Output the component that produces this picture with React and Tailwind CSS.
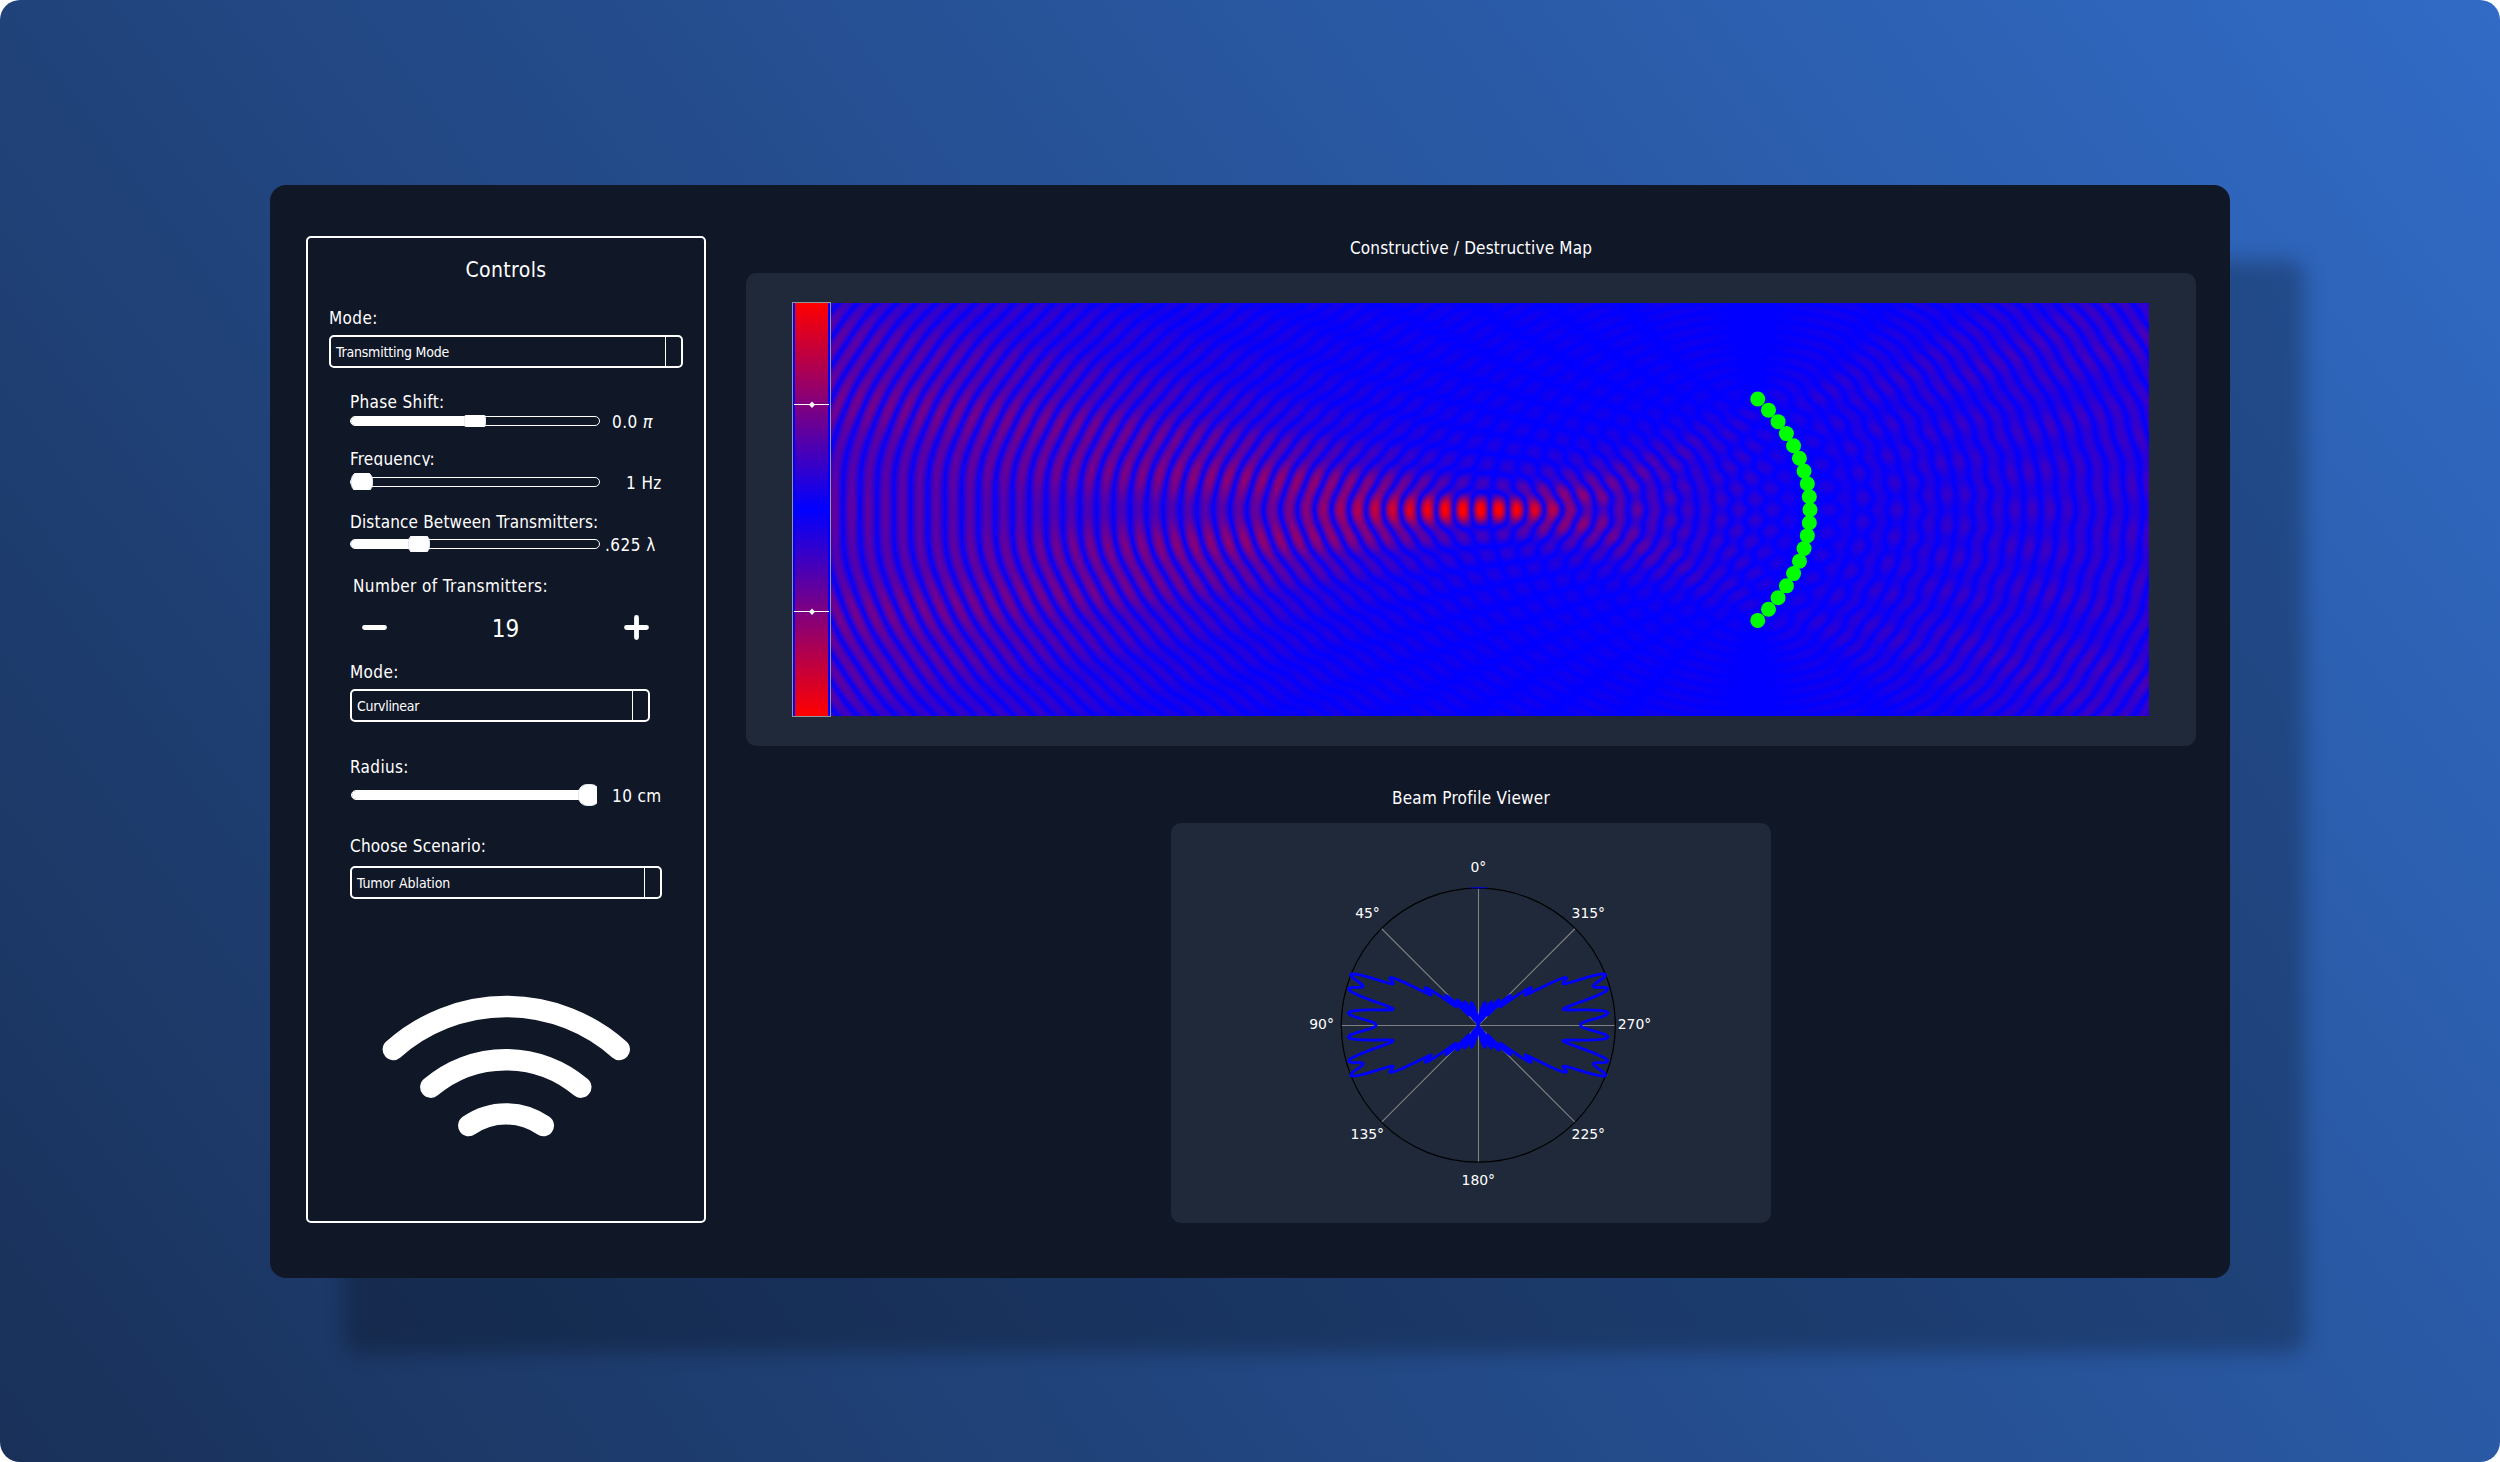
import React, { useLayoutEffect, useRef } from "react";

const COUNT = 19;
const HALF = (COUNT - 1) / 2;
const RADIUS = 9.65; // arc radius, in wavelengths
const STEP = (3.65 * Math.PI) / 180; // angle between neighbouring transmitters

const MAP = { width: 1318, height: 413, apexX: 978, apexY: 206.3, lambdaX: 33.85, lambdaY: 21.15, phase: 1.82, gain: 1.08 };

const ANGLES = Array.from({ length: COUNT }, (_, i) => (i - HALF) * STEP);
const SOURCES = ANGLES.map((a) => ({ x: -RADIUS * (1 - Math.cos(a)), y: RADIUS * Math.sin(a) }));

function fieldAt(x, y) {
  let sum = 0;
  for (const s of SOURCES) sum += Math.cos(2 * Math.PI * Math.hypot(x - s.x, y - s.y) + MAP.phase);
  return sum;
}

function arrayFactor(theta) {
  let re = 0;
  let im = 0;
  for (const a of ANGLES) {
    const p = 2 * Math.PI * RADIUS * Math.cos(a - theta);
    re += Math.cos(p);
    im += Math.sin(p);
  }
  return Math.hypot(re, im);
}

const SAMPLES = Array.from({ length: 1441 }, (_, i) => {
  const theta = (i / 1440) * 2 * Math.PI;
  return [theta, arrayFactor(theta)];
});
const PEAK = Math.max(...SAMPLES.map((s) => s[1]));
const BEAM = SAMPLES.map(([t, r]) => `${(307.2 + (137 * r * Math.cos(t)) / PEAK).toFixed(2)},${(202 - (137 * r * Math.sin(t)) / PEAK).toFixed(2)}`).join(" ");

function Label({ className = "", children }) {
  return <div className={"h-5 whitespace-pre text-[17px] leading-5 " + className}>{children}</div>;
}

function Select({ className, textClass, children }) {
  return (
    <div className={"flex h-[33px] shrink-0 rounded-[5px] border-2 border-white " + className}>
      <span className={"flex-1 pt-px pl-[5px] text-[14px] leading-[29px] " + textClass}>{children}</span>
      <span className="w-4 border-l border-white" />
    </div>
  );
}

function Slider({ className, fill, handle, trackClass = "border border-white" }) {
  return (
    <div className={"relative flex shrink-0 items-center overflow-hidden " + className}>
      <div className={"h-2.5 w-full overflow-hidden rounded-[5px] " + trackClass}>
        <div className={"h-full bg-white " + fill} />
      </div>
      <div className={"absolute top-1/2 h-[22px] w-[22px] -translate-y-1/2 rounded-[9px] border border-slate-200 bg-white " + handle} />
    </div>
  );
}

function InterferenceMap() {
  const ref = useRef(null);
  useLayoutEffect(() => {
    const { width, height, apexX, apexY, lambdaX, lambdaY, gain } = MAP;
    const ctx = ref.current.getContext("2d");
    const image = ctx.createImageData(width, height);
    let k = 0;
    for (let py = 0; py < height; py++) {
      for (let px = 0; px < width; px++) {
        const v = Math.min(1, (Math.abs(fieldAt((px - apexX) / lambdaX, (py - apexY) / lambdaY)) / COUNT) * gain);
        image.data[k++] = 255 * v;
        image.data[k++] = 0;
        image.data[k++] = 255 * (1 - v);
        image.data[k++] = 255;
      }
    }
    ctx.putImageData(image, 0, 0);
    ctx.fillStyle = "#00ff00";
    for (const s of SOURCES) {
      ctx.beginPath();
      ctx.arc(apexX + 1 + s.x * lambdaX, apexY + 0.4 + s.y * lambdaY, 7.5, 0, 2 * Math.PI);
      ctx.fill();
    }
  }, []);
  return <canvas ref={ref} width={MAP.width} height={MAP.height} className="mt-px block h-[413px] w-[1318px]" />;
}

function ColorBar() {
  return (
    <div className="flex h-[415px] w-[39px] border border-[#969696] bg-[#0000ff] px-0.5">
      <svg viewBox="0 0 33 413" className="h-[413px] w-[33px] overflow-visible">
        <defs>
          <linearGradient id="scale" x1="0" y1="0" x2="0" y2="1">
            <stop offset="0" stopColor="#ff0000" />
            <stop offset="0.5" stopColor="#0000ff" />
            <stop offset="1" stopColor="#ff0000" />
          </linearGradient>
        </defs>
        <rect x="0" y="0" width="33" height="413" fill="url(#scale)" />
        {[101.5, 308.5].map((y) => (
          <g key={y} fill="#fff">
            <rect x="-1" y={y - 0.5} width="35" height="1" />
            <path d={`M17 ${y - 3}l3 3.2-3 3.2-3-3.2z`} />
          </g>
        ))}
      </svg>
    </div>
  );
}

const TICKS = [
  ["0°", 307.3, 49],
  ["45°", 196.5, 94.7],
  ["315°", 417.3, 94.7],
  ["90°", 150.6, 206],
  ["270°", 463.5, 206],
  ["135°", 196.3, 315.7],
  ["225°", 417.3, 315.7],
  ["180°", 307.3, 361.7],
];

function BeamProfile() {
  return (
    <svg viewBox="0 0 600 400" className="h-[400px] w-[600px]">
      <g stroke="#808080" strokeWidth="1.1">
        <path d="M307.5 65.5v274M170.3 202.5h274M210.4 105.5l193.8 193.8M404.2 105.5L210.4 299.3" />
      </g>
      <circle cx="307.3" cy="202.2" r="137" fill="none" stroke="#000" strokeWidth="1.2" />
      <polyline points={BEAM} fill="none" stroke="#0000ff" strokeWidth="2.8" strokeLinejoin="round" />
      <path d="M299.5 64.8h16" stroke="#0000ff" strokeWidth="1" />
      <g fill="#fff" fontSize="13.9" textAnchor="middle" className="font-['DejaVu_Sans',sans-serif]">
        {TICKS.map(([t, x, y]) => (
          <text key={t} x={x} y={y}>{t}</text>
        ))}
      </g>
    </svg>
  );
}

function WifiIcon() {
  return (
    <svg viewBox="0 0 248 142" className="mt-24 ml-[74px] h-[142px] w-[248px] shrink-0" fill="none" stroke="#fff" strokeWidth="21.4" strokeLinecap="round">
      <path d="M11.3 54.5A170 170 0 0 1 237.3 54.5" />
      <path d="M48.8 92.2A116 116 0 0 1 198.8 92.2" />
      <path d="M86.8 130.6A65 65 0 0 1 161.3 130.6" />
    </svg>
  );
}

function Controls() {
  return (
    <section className="flex h-[987px] w-[400px] shrink-0 flex-col rounded-[5px] border-2 border-white">
      <h2 className="mt-5 text-center text-[21px] leading-6 tracking-[0.35px]">Controls</h2>
      <Label className="mt-[26px] ml-[21px] tracking-[0.4px]">Mode:</Label>
      <Select className="mt-[7px] ml-[21px] w-[354px]" textClass="tracking-[-0.2px]">Transmitting Mode</Select>

      <div className="flex flex-col pl-[42px]">
        <Label className="mt-6 tracking-[0.34px]">Phase Shift:</Label>
        <div className="-mt-[3px] flex h-[18px]">
          <Slider className="mt-1.5 h-3 w-[250px]" fill="w-1/2" handle="left-[114px]" />
          <Label className="mt-[3px] ml-3 tracking-[0.4px]">0.0 <i className="text-[18px]">π</i></Label>
        </div>

        <div className="mt-[22px] h-[17px] overflow-hidden">
          <Label className="tracking-[0.2px]">Frequency:</Label>
        </div>
        <div className="mt-[7px] flex">
          <Slider className="h-[17px] w-[250px]" fill="w-2.5" handle="left-px" />
          <Label className="ml-[26px] tracking-[0.4px]">1 Hz</Label>
        </div>

        <Label className="mt-[19px] tracking-[0.16px]">Distance Between Transmitters:</Label>
        <div className="mt-1 flex h-4">
          <Slider className="h-4 w-[250px]" fill="w-[26%]" handle="left-[58px]" />
          <Label className="-mt-px ml-[5px] tracking-[0.45px]">.625 λ</Label>
        </div>

        <Label className="mt-6 ml-[3px] tracking-[0.39px]">Number of Transmitters:</Label>
        <div className="mt-[15px] flex h-8 items-center justify-between pr-[55px] pl-3">
          <svg viewBox="0 0 25 25" className="h-[25px] w-[25px]" stroke="#fff" strokeWidth="4.8" strokeLinecap="round"><path d="M2.5 12.5h20" /></svg>
          <span className="pt-1 text-[24px] leading-8">19</span>
          <svg viewBox="0 0 25 25" className="h-[25px] w-[25px]" stroke="#fff" strokeWidth="4.8" strokeLinecap="round"><path d="M2.5 12.5h20M12.5 2.5v20" /></svg>
        </div>

        <Label className="mt-[19px] tracking-[0.4px]">Mode:</Label>
        <Select className="mt-[7px] w-[300px]" textClass="tracking-[-0.3px]">Curvlinear</Select>

        <Label className="mt-[35px] tracking-[0.35px]">Radius:</Label>
        <div className="mt-[7px] flex">
          <Slider className="ml-px h-[22px] w-[246px]" fill="w-full" handle="left-[227px]" />
          <Label className="mt-0.5 ml-[15px] tracking-[0.4px]">10 cm</Label>
        </div>

        <Label className="mt-[30px] tracking-[0.2px]">Choose Scenario:</Label>
        <Select className="mt-2.5 w-[312px]" textClass="tracking-[-0.1px]">Tumor Ablation</Select>
      </div>
      <WifiIcon />
    </section>
  );
}

export default function App() {
  return (
    <div className="h-[1462px] w-[2500px] bg-white font-['DejaVu_Sans_Condensed','DejaVu_Sans',sans-serif] text-white">
      <div className="flex h-full w-full items-start rounded-[20px] bg-[linear-gradient(53deg,#193159,#316bc6)] pt-[185px] pl-[270px]">
        <main className="flex h-[1093px] w-[1960px] rounded-[16px] bg-[#101727] pt-[51px] pl-9 shadow-[75px_75px_20px_rgba(0,0,0,0.25)]">
          <Controls />
          <div className="mt-0.5 ml-10 flex w-[1450px] flex-col items-center">
            <Label className="tracking-[0.17px]">Constructive / Destructive Map</Label>
            <section className="mt-[15px] flex h-[473px] w-full rounded-[10px] bg-[#1f293a] pt-[29px] pl-[46px]">
              <ColorBar />
              <InterferenceMap />
            </section>
            <Label className="mt-[42px] tracking-[0.25px]">Beam Profile Viewer</Label>
            <section className="mt-[15px] h-[400px] w-[600px] rounded-[10px] bg-[#1f293a]">
              <BeamProfile />
            </section>
          </div>
        </main>
      </div>
    </div>
  );
}
